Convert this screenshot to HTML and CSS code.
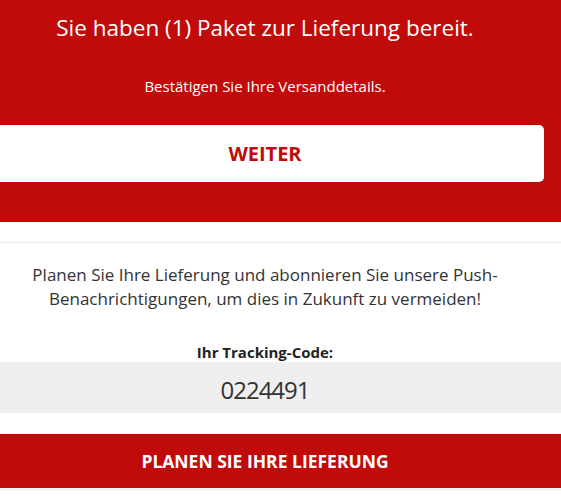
FILE: index.html
```html
<!DOCTYPE html>
<html lang="de">
<head>
<meta charset="utf-8">
<title>Lieferung</title>
<link rel="stylesheet" href="styles.css">
</head>
<body>
<div class="page">
  <header class="hero">
    <h1 class="hero-title">Sie haben (1) Paket zur Lieferung bereit.</h1>
    <p class="hero-sub">Bestätigen Sie Ihre Versanddetails.</p>
    <a class="btn-white" href="#">WEITER</a>
  </header>
  <section class="content">
    <p class="lead">Planen Sie Ihre Lieferung und abonnieren Sie unsere Push-Benachrichtigungen, um dies in Zukunft zu vermeiden!</p>
    <p class="code-label">Ihr Tracking-Code:</p>
    <div class="code-box">0224491</div>
    <a class="btn-red" href="#">PLANEN SIE IHRE LIEFERUNG</a>
    <div class="rule"></div>
  </section>
</div>
</body>
</html>
```

FILE: styles.css
```css
html, body {
  margin: 0;
  padding: 0;
  overflow: hidden;
  background: #ffffff;
}
body {
  font-family: "Open Sans", "Noto Sans", "DejaVu Sans", sans-serif;
  color: #333333;
}
.page {
  width: 700px;
  margin-left: -85px;
}
.hero {
  background: #c10a0a;
  color: #ffffff;
  display: flex;
  flex-direction: column;
  align-items: center;
  padding: 13px 0 40px;
}
.hero-title {
  margin: 0;
  font-size: 22.5px;
  font-weight: 400;
  line-height: 30px;
}
.hero-sub {
  margin: 33px 0 0;
  font-size: 15px;
  line-height: 20px;
}
.btn-white {
  margin-top: 29px;
  width: 558px;
  height: 57px;
  background: #ffffff;
  border-radius: 5px;
  display: flex;
  align-items: center;
  justify-content: center;
  color: #c10a0a;
  font-weight: 700;
  font-size: 20px;
  text-decoration: none;
}
.content {
  margin-top: 20px;
  border-top: 1px solid #ececec;
  display: flex;
  flex-direction: column;
  align-items: center;
}
.lead {
  margin: 20px 0 0;
  width: 480px;
  text-align: center;
  font-size: 17px;
  line-height: 24px;
}
.code-label {
  margin: 32px 0 0;
  font-size: 15px;
  font-weight: 700;
  line-height: 19px;
  color: #222222;
}
.code-box {
  align-self: stretch;
  box-sizing: border-box;
  height: 51px;
  padding-top: 3px;
  background: #efefef;
  display: flex;
  align-items: center;
  justify-content: center;
  font-size: 24px;
  letter-spacing: -1px;
  color: #333333;
}
.btn-red {
  align-self: stretch;
  margin-top: 21px;
  height: 54px;
  background: #c10a0a;
  color: #ffffff;
  display: flex;
  align-items: center;
  justify-content: center;
  font-size: 17.5px;
  font-weight: 700;
  text-decoration: none;
}
.rule {
  align-self: stretch;
  margin-top: 1px;
  height: 1px;
  background: #ececec;
}
```
